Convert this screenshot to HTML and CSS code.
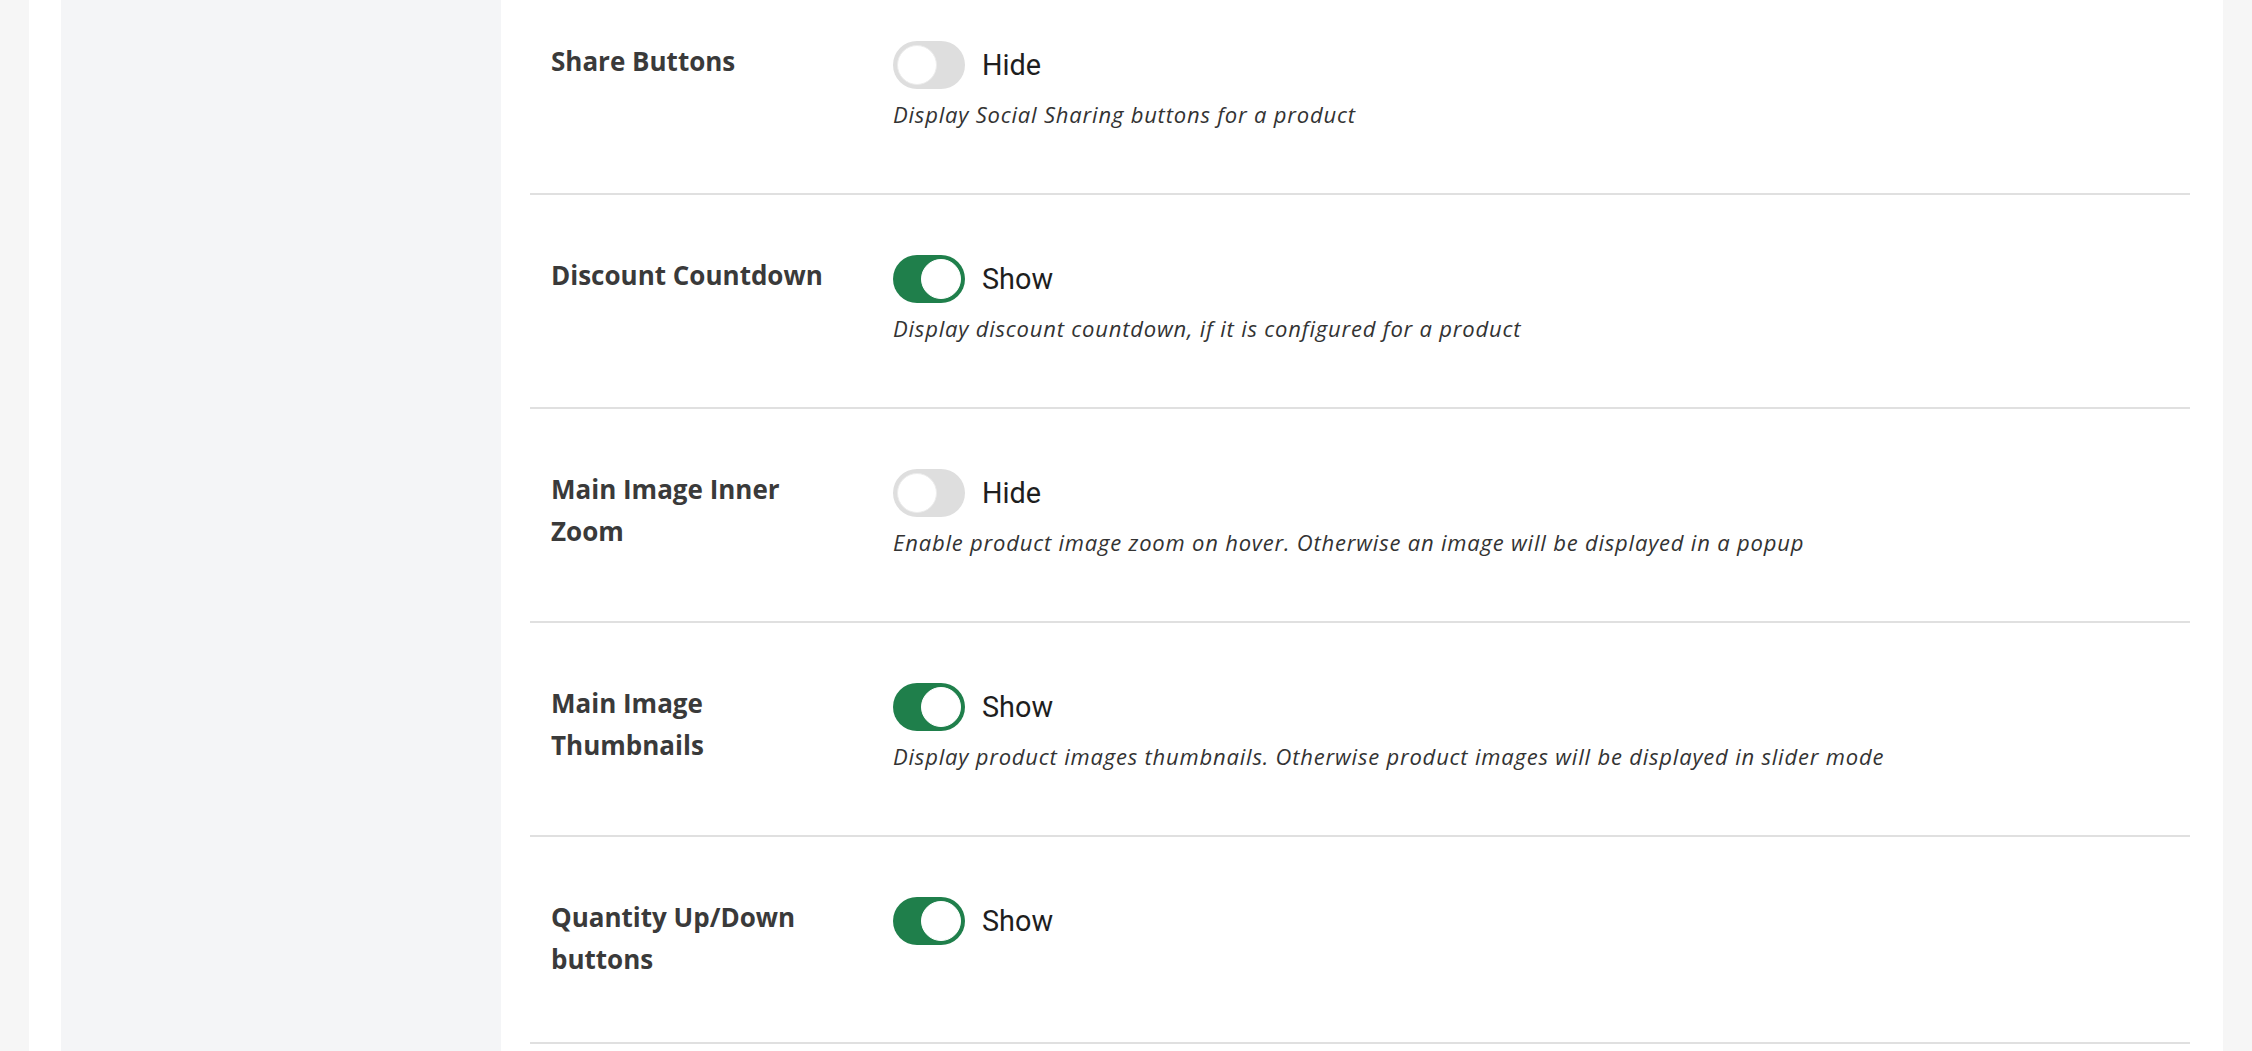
FILE: index.html
```html
<!DOCTYPE html>
<html lang="en">
<head>
<meta charset="utf-8">
<title>Product settings</title>
<link rel="stylesheet" href="styles.css">
</head>
<body>
<div class="page">
  <div class="frame">
    <aside class="sidebar"></aside>
    <main class="main">
      <div class="settings">
        <div class="row">
          <div class="label">Share Buttons</div>
          <div class="control">
            <div class="switch-line">
              <span class="toggle"><span class="knob"></span></span>
              <span class="state">Hide</span>
            </div>
            <div class="desc">Display Social Sharing buttons for a product</div>
          </div>
        </div>
        <div class="row">
          <div class="label">Discount Countdown</div>
          <div class="control">
            <div class="switch-line">
              <span class="toggle on"><span class="knob"></span></span>
              <span class="state">Show</span>
            </div>
            <div class="desc">Display discount countdown, if it is configured for a product</div>
          </div>
        </div>
        <div class="row">
          <div class="label">Main Image Inner Zoom</div>
          <div class="control">
            <div class="switch-line">
              <span class="toggle"><span class="knob"></span></span>
              <span class="state">Hide</span>
            </div>
            <div class="desc">Enable product image zoom on hover. Otherwise an image will be displayed in a popup</div>
          </div>
        </div>
        <div class="row">
          <div class="label">Main Image Thumbnails</div>
          <div class="control">
            <div class="switch-line">
              <span class="toggle on"><span class="knob"></span></span>
              <span class="state">Show</span>
            </div>
            <div class="desc">Display product images thumbnails. Otherwise product images will be displayed in slider mode</div>
          </div>
        </div>
        <div class="row">
          <div class="label">Quantity Up/Down buttons</div>
          <div class="control">
            <div class="switch-line">
              <span class="toggle on"><span class="knob"></span></span>
              <span class="state">Show</span>
            </div>
          </div>
        </div>
      </div>
    </main>
  </div>
</div>
</body>
</html>
```
FILE: styles.css
```css
html, body {
  margin: 0;
  padding: 0;
  height: 100%;
  overflow: hidden;
  background: #f6f6f6;
}

body {
  font-family: Roboto, "Liberation Sans", sans-serif;
  color: #222;
}

.page {
  height: 1051px;
  padding: 0 29px;
  display: flex;
}

.frame {
  flex: 1;
  display: flex;
  background: #fff;
  padding-left: 32px;
}

.sidebar {
  width: 440px;
  flex: none;
  background: #f4f5f7;
}

.main {
  flex: 1;
  padding: 0 33px 0 29px;
  overflow: hidden;
}

.settings {
  margin-top: -19px;
}

.row {
  display: grid;
  grid-template-columns: 342px 1fr;
  align-items: start;
  padding: 60px 21px 62px;
  border-bottom: 2px solid #e0e0e0;
}

.label {
  font-family: "Open Sans", Roboto, sans-serif;
  font-size: 26px;
  font-weight: 700;
  line-height: 41.6px;
  letter-spacing: 0;
  color: #3a3a3a;
  max-width: 285px;
}

.control {
  display: flex;
  flex-direction: column;
}

.switch-line {
  display: flex;
  align-items: center;
  gap: 17px;
  height: 48px;
}

.toggle {
  position: relative;
  width: 72px;
  height: 48px;
  border-radius: 24px;
  background: #dedede;
  flex: none;
}

.knob {
  position: absolute;
  top: 4px;
  left: 4px;
  width: 38px;
  height: 38px;
  border-radius: 50%;
  background: #fff;
  border: 1px solid #ececec;
}

.toggle.on {
  background: #1f7f4b;
}

.toggle.on .knob {
  left: 28px;
  border-color: #fff;
}

.state {
  font-size: 28.8px;
  line-height: 48px;
  color: #1e1e1e;
}

.desc {
  margin-top: 9px;
  font-family: "Open Sans", Roboto, sans-serif;
  font-size: 22px;
  line-height: 33px;
  letter-spacing: 0.8px;
  font-style: italic;
  color: #333;
}
```
